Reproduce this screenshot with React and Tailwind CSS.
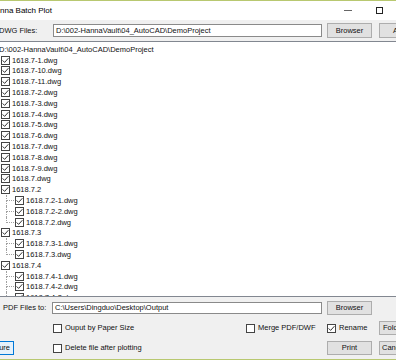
import React from 'react';

const tree = [
  { t: 'D:\\002-HannaVault\\04_AutoCAD\\DemoProject', kind: 'root' },
  { t: '1618.7-1.dwg' },
  { t: '1618.7-10.dwg' },
  { t: '1618.7-11.dwg' },
  { t: '1618.7-2.dwg' },
  { t: '1618.7-3.dwg' },
  { t: '1618.7-4.dwg' },
  { t: '1618.7-5.dwg' },
  { t: '1618.7-6.dwg' },
  { t: '1618.7-7.dwg' },
  { t: '1618.7-8.dwg' },
  { t: '1618.7-9.dwg' },
  { t: '1618.7.dwg' },
  { t: '1618.7.2', kind: 'parent' },
  { t: '1618.7.2-1.dwg', kind: 'child' },
  { t: '1618.7.2-2.dwg', kind: 'child' },
  { t: '1618.7.2.dwg', kind: 'child', last: true },
  { t: '1618.7.3', kind: 'parent' },
  { t: '1618.7.3-1.dwg', kind: 'child' },
  { t: '1618.7.3.dwg', kind: 'child', last: true },
  { t: '1618.7.4', kind: 'parent' },
  { t: '1618.7.4-1.dwg', kind: 'child' },
  { t: '1618.7.4-2.dwg', kind: 'child' },
  { t: '1618.7.4-3.dwg', kind: 'child' },
  { t: '1618.7.4.dwg', kind: 'child', last: true },
];

function Check({ checked = true }) {
  return (
    <span className="flex h-[9px] w-[9px] shrink-0 items-center justify-center border border-[#444] bg-white">
      {checked && (
        <svg width="7" height="7" viewBox="0 0 7 7">
          <path d="M0.6 3.4 L2.6 5.4 L6.4 1.2" fill="none" stroke="#333" strokeWidth="1" />
        </svg>
      )}
    </span>
  );
}

function Btn({ children, className = '' }) {
  return (
    <div className={`flex h-[14px] w-[45px] shrink-0 items-center justify-center border border-[#adadad] bg-[#e1e1e1] whitespace-nowrap ${className}`}>
      {children}
    </div>
  );
}

function TreeRow({ row }) {
  if (row.kind === 'root') {
    return (
      <div className="flex h-[10.8px] items-center">
        <span className="-ml-[1px] whitespace-nowrap">{row.t}</span>
      </div>
    );
  }
  if (row.kind === 'child') {
    return (
      <div className="flex h-[10.8px] items-center">
        <div className="flex w-[15px] shrink-0 self-stretch">
          <div className="w-[6px]" />
          <div className="flex w-[8px] flex-col">
            <div className="flex-1 border-b border-l border-dotted border-[#a0a0a0]" />
            <div className={`flex-1 ${row.last ? '' : 'border-l border-dotted border-[#a0a0a0]'}`} />
          </div>
        </div>
        <Check />
        <span className="ml-[2px] whitespace-nowrap">{row.t}</span>
      </div>
    );
  }
  return (
    <div className="flex h-[10.8px] items-center pl-[1px]">
      <Check />
      <span className="ml-[2px] whitespace-nowrap">{row.t}</span>
    </div>
  );
}

export default function App() {
  return (
    <div className="flex h-[360px] w-[396px] flex-col overflow-hidden bg-[#f0f0f0] font-['Liberation_Sans',Arial,sans-serif] text-[7.5px] text-[#111]">
      <div className="h-px shrink-0 bg-[#b8c870]" />

      {/* title bar */}
      <div className="flex h-[19px] shrink-0 items-center bg-white pr-[13px]">
        <span className="whitespace-nowrap text-[8px] text-black">nna Batch Plot</span>
        <div className="flex-1" />
        <div className="h-px w-[8px] bg-[#666]" />
        <div className="ml-[24px] h-[7px] w-[7px] border border-[#222]" />
      </div>

      {/* dwg folder row */}
      <div className="flex h-[21px] shrink-0 items-center">
        <span className="-ml-[1px] w-[54px] shrink-0 whitespace-nowrap">DWG Files:</span>
        <div className="flex h-[13px] w-[269px] shrink-0 items-center border border-[#8a8a8a] bg-white pl-[2px] whitespace-nowrap">
          D:\002-HannaVault\04_AutoCAD\DemoProject
        </div>
        <Btn className="ml-[5px] h-[15px]">Browser</Btn>
        <Btn className="ml-[7px] h-[15px] justify-start pl-[13px]">All</Btn>
      </div>

      {/* file tree */}
      <div className="h-[256px] shrink-0 overflow-hidden border-y border-[#828790] bg-white pt-[2px]">
        {tree.map((row, i) => (
          <TreeRow key={i} row={row} />
        ))}
      </div>

      {/* output row */}
      <div className="flex h-[21px] shrink-0 items-center">
        <span className="w-[52px] shrink-0 whitespace-nowrap pl-[3px]">PDF Files to:</span>
        <div className="flex h-[12px] w-[270px] shrink-0 items-center border border-[#8a8a8a] bg-white pl-[2px] whitespace-nowrap">
          C:\Users\Dingduo\Desktop\Output
        </div>
        <Btn className="ml-[5px]">Browser</Btn>
      </div>

      {/* options row */}
      <div className="flex h-[20px] shrink-0 items-center pl-[53px]">
        <label className="flex w-[193px] shrink-0 items-center gap-[3px] whitespace-nowrap">
          <Check checked={false} />
          Ouput by Paper Size
        </label>
        <label className="flex w-[81px] shrink-0 items-center gap-[3px] whitespace-nowrap">
          <Check checked={false} />
          Merge PDF/DWF
        </label>
        <label className="flex w-[52px] shrink-0 items-center gap-[3px] whitespace-nowrap">
          <Check />
          Rename
        </label>
        <Btn className="justify-start pl-[3px]">Folder</Btn>
      </div>

      {/* action row */}
      <div className="flex h-[20px] shrink-0 items-center">
        <div className="flex h-[14px] w-[14px] shrink-0 items-center justify-end border-y border-r border-[#0078d7] bg-[#e5f1fb] pr-[3px]">
          ure
        </div>
        <label className="ml-[39px] flex w-[274px] shrink-0 items-center gap-[3px] whitespace-nowrap">
          <Check checked={false} />
          Delete file after plotting
        </label>
        <Btn>Print</Btn>
        <Btn className="ml-[7px] justify-start pl-[2px]">Cancel</Btn>
      </div>

      <div className="h-px shrink-0" />
      <div className="h-px shrink-0 bg-[#b8c870]" />
    </div>
  );
}
